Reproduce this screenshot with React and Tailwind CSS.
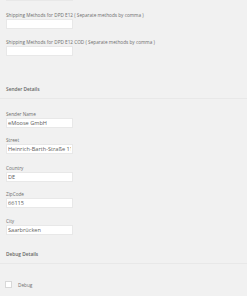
import React from 'react';

const font = { fontFamily: '"Open Sans", "Liberation Sans", sans-serif' };

function Field({ label, value, className = '' }) {
  return (
    <div className={`flex flex-col ${className}`}>
      <label className="text-[4.7px] leading-[6px] text-[#6e6e6e]">{label}</label>
      <input
        readOnly
        value={value}
        className="mt-[1px] h-[10px] w-[67px] border border-[#e8e8e8] bg-white px-[1px] text-[5.6px] leading-[8px] text-[#5e5e5e] outline-none"
        style={font}
      />
    </div>
  );
}

function Heading({ children, className = '' }) {
  return (
    <div className={className}>
      <h3 className="pl-[6px] text-[4.8px] font-semibold leading-[6px] text-[#666666]">{children}</h3>
      <div className="mt-[6px] h-px w-full bg-[#e8e8e8]" />
    </div>
  );
}

export default function App() {
  return (
    <div className="h-[296px] w-full overflow-hidden bg-[#f1f1f1]" style={font}>
      <div className="pl-[6px]">
        <input readOnly className="-mt-[9px] block h-[10px] w-[67px] border border-[#e8e8e8] bg-white outline-none" />
        <Field className="mt-[11px]" label="Shipping Methods for DPD E12 ( Separate methods by comma )" value="" />
        <Field className="mt-[9.5px]" label="Shipping Methods for DPD E12 COD ( Separate methods by comma )" value="" />
      </div>

      <Heading className="mt-[30px]">Sender Details</Heading>

      <div className="pl-[6px]">
        <Field className="mt-[12px]" label="Sender Name" value="eMoose GmbH" />
        <Field className="mt-[9.5px]" label="Street" value="Heinrich-Barth-Straße 11" />
        <Field className="mt-[10.5px]" label="Country" value="DE" />
        <Field className="mt-[9.5px]" label="ZipCode" value="66115" />
        <Field className="mt-[10px]" label="City" value="Saarbrücken" />
      </div>

      <Heading className="mt-[16px]">Debug Details</Heading>

      <div className="mt-[17px] flex items-center gap-[6px] pl-[5px]">
        <span className="block h-[7px] w-[7px] border border-[#d8d8d8] bg-white" />
        <span className="text-[4.7px] leading-[6px] text-[#6e6e6e]">Debug</span>
      </div>
    </div>
  );
}
